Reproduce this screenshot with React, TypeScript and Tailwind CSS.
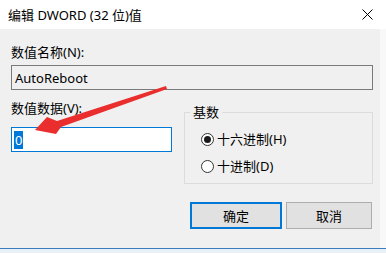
import React from 'react';

const font = { fontFamily: '"Noto Sans", "Noto Sans CJK SC", sans-serif' };

function Radio({ checked, label }: { checked?: boolean; label: string }) {
  return (
    <div className="flex items-center h-[16px] ml-[11px]">
      <span className="w-[13px] h-[13px] rounded-full border border-[#333] bg-white flex items-center justify-center">
        {checked && <span className="w-[7px] h-[7px] rounded-full bg-[#1a1a1a]" />}
      </span>
      <span className="ml-[3px]">{label}</span>
    </div>
  );
}

export default function App() {
  return (
    <div className="relative w-[386px] h-[253px] bg-white flex flex-col overflow-hidden text-[13px] leading-[16px] text-black" style={font}>
      {/* title bar */}
      <div className="h-[29px] flex items-center justify-between pl-[8px] pr-[13px] bg-white">
        <span className="text-[13px]">编辑 DWORD (32 位)值</span>
        <svg width="11" height="11" viewBox="0 0 11 11">
          <path d="M0.5 0.5 L10.5 10.5 M10.5 0.5 L0.5 10.5" stroke="#000" strokeWidth="1" />
        </svg>
      </div>

      <div className="flex-1 flex bg-[#f0f0f0]">
        <div className="flex-1 flex flex-col pl-[11px] pr-[7px]">
          <div className="mt-[15px]">数值名称(N):</div>
          <div className="mt-[5px] h-[25px] border border-[#7a7a7a] bg-[#f0f0f0] flex items-center pl-[3px]">
            AutoReboot
          </div>

          <div className="flex mt-[10px]">
            <div className="w-[161px] flex flex-col">
              <div>数值数据(V):</div>
              <div className="mt-[11px] h-[25px] border border-[#0078d7] bg-white flex items-center pl-[2px]">
                <span className="bg-[#0078d7] text-white px-[1px] leading-[18px]">0</span>
              </div>
            </div>

            <fieldset className="ml-[12px] mt-[4px] flex-1 h-[80px] border border-[#dcdcdc] pl-[5px] pr-[5px]">
              <legend className="px-[3px]">基数</legend>
              <div className="mt-[11px]">
                <Radio checked label="十六进制(H)" />
              </div>
              <div className="mt-[11px]">
                <Radio label="十进制(D)" />
              </div>
            </fieldset>
          </div>

          <div className="flex justify-end gap-[4px] mt-[18px] mr-[1px]">
            <button className="w-[92px] h-[27px] border-2 border-[#0078d7] bg-[#e1e1e1] flex items-center justify-center">
              确定
            </button>
            <button className="w-[86px] h-[27px] border border-[#adadad] bg-[#e1e1e1] flex items-center justify-center">
              取消
            </button>
          </div>
        </div>
        <div className="w-[6px] bg-[#f8f8f8]" />
      </div>

      <div className="h-[1px] bg-[#3b7cc0]" />
      <div className="h-[4px] bg-[#e8f0f8]" />

      {/* red annotation arrow */}
      <svg className="absolute left-0 top-0 pointer-events-none" width="386" height="253" viewBox="0 0 386 253">
        <polygon points="35,130 47,117 57,121 166,86 167,89 61,127 56,134" fill="#ea2e2e" />
      </svg>
    </div>
  );
}
